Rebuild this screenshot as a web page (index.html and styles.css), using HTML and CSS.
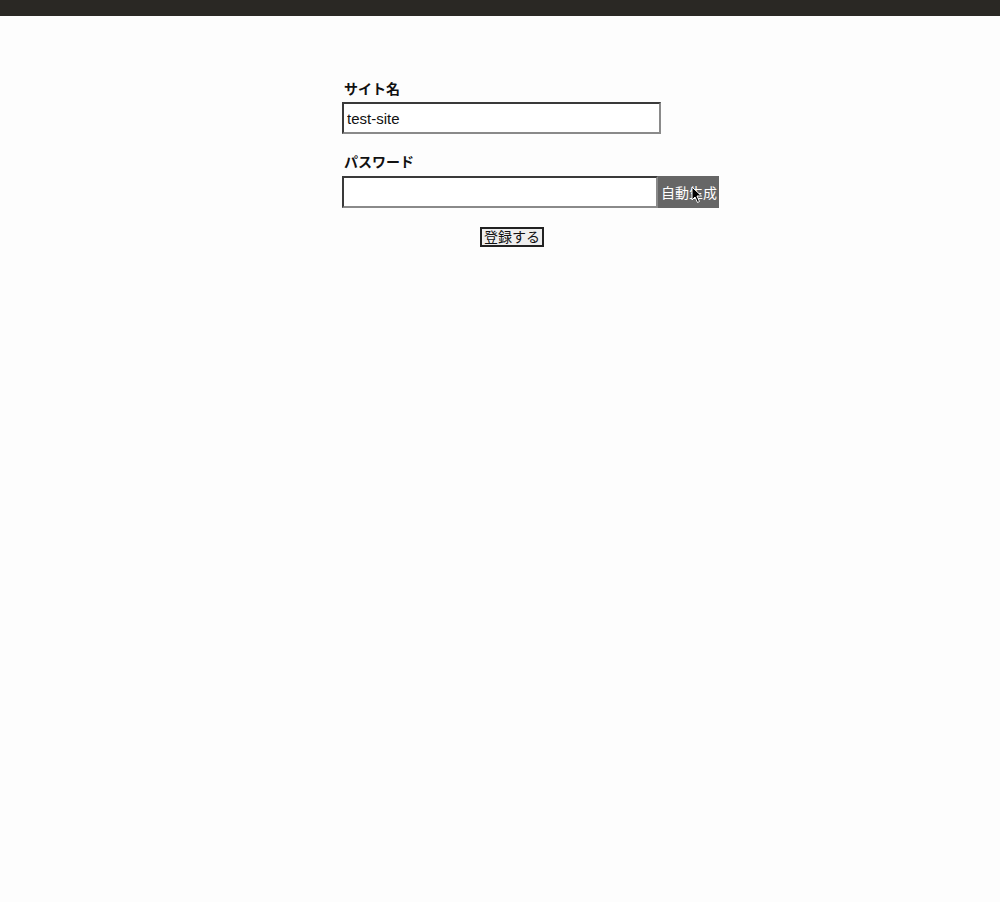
FILE: index.html
```html
<!DOCTYPE html>
<html lang="ja">
<head>
<meta charset="utf-8">
<title>登録</title>
<link rel="stylesheet" href="styles.css">
</head>
<body>
<div class="topbar"></div>
<main class="main">
  <form class="form">
    <div class="field">
      <label class="label">サイト名</label>
      <input class="input input-site" type="text" value="test-site">
    </div>
    <div class="field field-pw">
      <label class="label">パスワード</label>
      <div class="pw-row">
        <input class="input input-pw" type="text" value="">
        <button type="button" class="gen-btn">自動生成
          <svg class="cursor" width="12" height="18" viewBox="0 0 12 18"><path d="M1 1 L1 14 L4 11 L6.5 16.5 L8.5 15.5 L6 10 L10.5 10 Z" fill="#000" stroke="#fff" stroke-width="1"/></svg>
        </button>
      </div>
    </div>
    <div class="submit-row">
      <button type="button" class="submit">登録する</button>
    </div>
  </form>
</main>
</body>
</html>
```
FILE: styles.css
```css
html, body {
  margin: 0;
  padding: 0;
  background: #fdfdfd;
  height: 100%;
}
body {
  font-family: "Liberation Sans", "Noto Sans CJK JP", sans-serif;
  color: #111;
}
.topbar {
  height: 16px;
  background: #2a2824;
}
.main {
  padding-top: 62px;
  padding-left: 342px;
}
.form {
  width: 377px;
}
.field {
  margin-bottom: 17px;
}
.field-pw {
  margin-bottom: 19px;
}
.field-pw .label {
  margin-bottom: 5px;
}
.label {
  display: block;
  font-family: "Noto Sans CJK JP", sans-serif;
  font-weight: 700;
  font-size: 14px;
  line-height: 20px;
  margin-bottom: 4px;
  padding-left: 2px;
  color: #111;
}
.input {
  box-sizing: border-box;
  height: 32px;
  margin: 0;
  border-style: solid;
  border-width: 2px;
  border-color: #3a3a3a #8a8a8a #8a8a8a #3a3a3a;
  background: #fff;
  font-family: "Liberation Sans", sans-serif;
  font-size: 15px;
  padding: 0 3px;
  color: #111;
  outline: none;
}
.input-site {
  width: 319px;
  display: block;
}
.pw-row {
  display: flex;
  height: 32px;
}
.input-pw {
  width: 316px;
}
.gen-btn {
  position: relative;
  width: 61px;
  height: 32px;
  margin: 0;
  padding: 0 0 0 1px;
  border: none;
  background: #666;
  color: #fff;
  font-family: "Noto Sans CJK JP", sans-serif;
  font-size: 14px;
  line-height: 32px;
  white-space: nowrap;
}
.cursor {
  position: absolute;
  left: 33px;
  top: 10px;
}
.submit-row {
  padding-left: 138px;
}
.submit {
  box-sizing: border-box;
  height: 20px;
  width: 64px;
  margin: 0;
  padding: 0 0 2px 0;
  border: 2px solid #222;
  background: #efefef;
  font-family: "Noto Sans CJK JP", sans-serif;
  font-size: 14px;
  line-height: 14px;
  color: #111;
}
```
